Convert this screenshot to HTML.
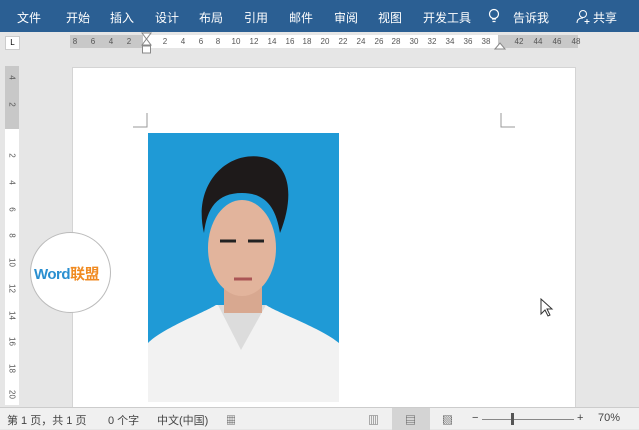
<!DOCTYPE html><html><head><meta charset="utf-8"><style>
*{margin:0;padding:0;box-sizing:border-box}
body{width:639px;height:429px;overflow:hidden;background:#e6e6e6;font-family:"Liberation Sans","Noto Sans CJK SC",sans-serif;position:relative}
.rib{position:absolute;left:0;top:0;width:639px;height:32px;background:#2b5f93;color:#fff;font-size:12px}
.rib span{position:absolute;top:9px}
.ab{position:absolute}
.hr span{position:absolute;top:35px;height:13px;font-size:8px;color:#555;line-height:13px;transform:translateX(-50%)}
.st{position:absolute;left:0;top:407px;width:639px;height:22px;background:#f0f0f0;border-top:1px solid #ccc;font-size:11px;color:#444}
.st span{position:absolute;top:4px}
.vr div{position:absolute;left:6px;width:12px;text-align:center;font-size:8px;color:#555;transform:rotate(90deg)}
</style></head><body>
<div class="rib">
<span style="left:17px">文件</span><span style="left:66px">开始</span><span style="left:110px">插入</span><span style="left:155px">设计</span><span style="left:199px">布局</span><span style="left:244px">引用</span><span style="left:289px">邮件</span><span style="left:334px">审阅</span><span style="left:378px">视图</span><span style="left:423px">开发工具</span>
<svg class="ab" style="left:488px;top:8px" width="12" height="17"><circle cx="6" cy="6" r="4.5" fill="none" stroke="#fff" stroke-width="1.2"/><path d="M4 11h4M4.5 13.5h3" stroke="#fff" stroke-width="1.2"/></svg>
<span style="left:513px">告诉我</span>
<svg class="ab" style="left:576px;top:9px" width="16" height="16"><circle cx="7" cy="5" r="3.5" fill="none" stroke="#fff"/><path d="M1 14c0-4 3-5 6-5M11 10v5M8.5 12.5h5" stroke="#fff" fill="none"/></svg>
<span style="left:593px">共享</span>
</div>
<div class="ab" style="left:5px;top:36px;width:15px;height:14px;background:#fff;border:1px solid #ccc;font-size:8px;text-align:center;line-height:12px">L</div>
<div class="ab" style="left:70px;top:35px;width:508px;height:13px;background:#c8c8c8"></div>
<div class="ab" style="left:143px;top:35px;width:355px;height:13px;background:#fff"></div>
<div class="hr">
<span style="left:75px">8</span><span style="left:93px">6</span><span style="left:111px">4</span><span style="left:129px">2</span>
<span style="left:165px">2</span><span style="left:183px">4</span><span style="left:201px">6</span><span style="left:218px">8</span><span style="left:236px">10</span><span style="left:254px">12</span><span style="left:272px">14</span><span style="left:290px">16</span><span style="left:307px">18</span><span style="left:325px">20</span><span style="left:343px">22</span><span style="left:361px">24</span><span style="left:379px">26</span><span style="left:396px">28</span><span style="left:414px">30</span><span style="left:432px">32</span><span style="left:450px">34</span><span style="left:468px">36</span><span style="left:486px">38</span>
<span style="left:519px">42</span><span style="left:538px">44</span><span style="left:557px">46</span><span style="left:576px">48</span>
</div>
<svg class="ab" style="left:141px;top:32px" width="12" height="25"><path d="M1 1h9L5.5 7zM1 13l4.5-6 4.5 6z" fill="#fff" stroke="#888"/><rect x="1.5" y="14" width="8" height="7" fill="#fff" stroke="#888"/></svg>
<svg class="ab" style="left:494px;top:42px" width="12" height="8"><path d="M1 7l5-6 5 6z" fill="#fff" stroke="#888"/></svg>
<div class="ab" style="left:5px;top:66px;width:14px;height:63px;background:#c8c8c8"></div>
<div class="ab" style="left:5px;top:129px;width:14px;height:276px;background:#fff"></div>
<div class="vr">
<div style="top:73px">4</div><div style="top:100px">2</div>
<div style="top:151px">2</div><div style="top:178px">4</div><div style="top:205px">6</div><div style="top:231px">8</div><div style="top:258px">10</div><div style="top:284px">12</div><div style="top:311px">14</div><div style="top:337px">16</div><div style="top:364px">18</div><div style="top:390px">20</div>
</div>
<div class="ab" style="left:72px;top:67px;width:504px;height:340px;background:#fff;border:1px solid #d4d4d4;border-bottom:none"></div>
<svg class="ab" style="left:133px;top:113px" width="16" height="16"><path d="M14 0v14H0" fill="none" stroke="#999"/></svg>
<svg class="ab" style="left:500px;top:113px" width="16" height="16"><path d="M1 0v14h14" fill="none" stroke="#999"/></svg>
<svg class="ab" style="left:148px;top:133px" width="191" height="269">
<rect width="191" height="269" fill="#1f9ad6"/>
<path d="M0 210c15-15 55-30 68-38h50c12 8 55 23 73 38v59H0z" fill="#f2f2f2"/>
<path d="M70 172l23 45 25-45z" fill="#dcdcdc"/>
<rect x="76" y="148" width="38" height="32" fill="#d8a890"/>
<ellipse cx="94" cy="115" rx="34" ry="48" fill="#e2b49c"/>
<path d="M56 100c-12-50 25-85 62-75 25 8 28 40 14 75-4-25-14-40-38-40-25 0-35 15-38 40z" fill="#1e1a1a"/>
<path d="M72 108h16M100 108h16" stroke="#222" stroke-width="3"/>
<path d="M86 146h18" stroke="#a55" stroke-width="3"/>
</svg>
<svg class="ab" style="left:540px;top:298px" width="14" height="20"><path d="M1 1v15l4-4 3 6 2-1-3-6h5z" fill="#fff" stroke="#333"/></svg>
<div class="ab" style="left:30px;top:232px;width:81px;height:81px;border-radius:50%;background:#fff;border:1px solid #bbb"></div>
<div class="ab" style="left:34px;top:263px;font-size:15px;font-weight:bold;color:#2a8fd0;letter-spacing:-0.5px">Word<span style="color:#f08a20">联盟</span></div>
<div class="st">
<span style="left:7px">第 1 页，共 1 页</span><span style="left:108px">0 个字</span><span style="left:157px">中文(中国)</span>
<span style="left:226px;font-size:10px">▦</span>
<span style="left:368px">▥</span>
<div class="ab" style="left:392px;top:0;width:38px;height:22px;background:#d4d4d4"></div>
<span style="left:405px">▤</span><span style="left:442px">▧</span>
<span style="left:472px">−</span>
<div class="ab" style="left:482px;top:11px;width:92px;height:1px;background:#888"></div>
<div class="ab" style="left:511px;top:5px;width:3px;height:12px;background:#555"></div>
<span style="left:577px">+</span><span style="left:598px">70%</span>
</div>
</body></html>
